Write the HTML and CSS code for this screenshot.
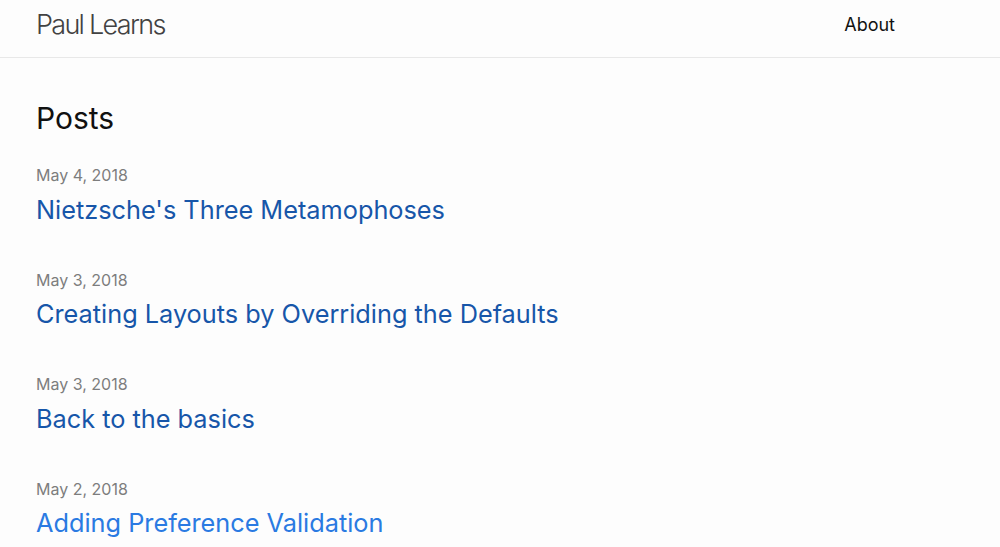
FILE: index.html
```html
<!DOCTYPE html>
<html lang="en">
<head>
<meta charset="utf-8">
<title>Paul Learns</title>
<link rel="stylesheet" href="styles.css">
</head>
<body>
<header class="site-header">
  <div class="header-inner">
    <a class="site-title" href="#">Paul Learns</a>
    <nav class="site-nav">
      <a class="page-link" href="#">About</a>
    </nav>
  </div>
</header>
<main class="page-content">
  <h1 class="page-heading">Posts</h1>
  <ul class="post-list">
    <li class="post-item">
      <span class="post-meta">May 4, 2018</span>
      <a class="post-link visited" href="#">Nietzsche's Three Metamophoses</a>
    </li>
    <li class="post-item">
      <span class="post-meta">May 3, 2018</span>
      <a class="post-link visited" href="#">Creating Layouts by Overriding the Defaults</a>
    </li>
    <li class="post-item">
      <span class="post-meta">May 3, 2018</span>
      <a class="post-link visited" href="#">Back to the basics</a>
    </li>
    <li class="post-item">
      <span class="post-meta">May 2, 2018</span>
      <a class="post-link" href="#">Adding Preference Validation</a>
    </li>
  </ul>
</main>
</body>
</html>
```
FILE: styles.css
```css
html, body {
  margin: 0;
  padding: 0;
}
body {
  background: #fdfdfd;
  font-family: Inter, "Liberation Sans", sans-serif;
  color: #111;
  overflow: hidden;
}
a { text-decoration: none; }
.site-header {
  border-bottom: 1px solid #e8e8e8;
}
.header-inner {
  display: flex;
  justify-content: space-between;
  align-items: center;
  height: 48px;
  padding: 0 105px 9px 36px;
}
.site-title {
  font-size: 27px;
  font-weight: 300;
  letter-spacing: -1.7px;
  color: #424242;
}
.page-link {
  font-size: 18px;
  color: #111;
}
.page-content {
  padding: 40px 36px 0;
}
.page-heading {
  margin: 0 0 25px;
  font-size: 30px;
  font-weight: 400;
  line-height: 40px;
}
.post-list {
  list-style: none;
  margin: 0;
  padding: 0;
  display: flex;
  flex-direction: column;
  gap: 42px;
}
.post-item {
  display: flex;
  flex-direction: column;
  gap: 6.5px;
}
.post-meta {
  font-size: 16px;
  color: #7d7d7d;
  line-height: 24px;
}
.post-link {
  font-size: 25.3px;
  line-height: 32px;
  color: #2a7ae2;
}
.post-link.visited {
  color: #1756a9;
}
```
